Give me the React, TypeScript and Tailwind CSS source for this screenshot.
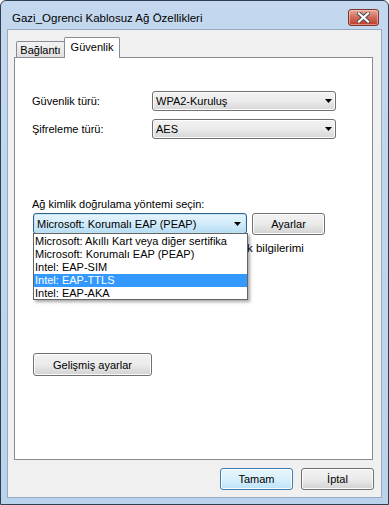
import React from "react";

function Arrow() {
  return (
    <svg width="7" height="4" viewBox="0 0 7 4" className="block">
      <path d="M0 0 H7 L3.5 4 Z" fill="#000" />
    </svg>
  );
}

function Combo({ text, width }: { text: string; width: string }) {
  return (
    <div
      className={`${width} h-[20px] border border-[#707070] rounded-[3px] bg-gradient-to-b from-[#f2f2f2] via-[#ebebeb] to-[#d6d6d6] flex items-center pl-[3px] pr-[3px] shadow-[inset_0_0_0_1px_#fcfcfc]`}
    >
      <span className="flex-1 leading-[14px]">{text}</span>
      <Arrow />
    </div>
  );
}

function Button({
  text,
  w,
  h,
  focused,
}: {
  text: string;
  w: string;
  h: string;
  focused?: boolean;
}) {
  return (
    <div
      className={`${w} ${h} rounded-[3px] border flex items-center justify-center shadow-[inset_0_0_0_1px_#fcfcfc] ${
        focused
          ? "border-[#3c7fb1] bg-gradient-to-b from-[#e8f5fc] via-[#d9f0fc] to-[#bde3f7]"
          : "border-[#707070] bg-gradient-to-b from-[#f2f2f2] via-[#ebebeb] to-[#d2d2d2]"
      }`}
    >
      <span className="leading-[14px]">{text}</span>
    </div>
  );
}

export default function App() {
  const items = [
    "Microsoft: Akıllı Kart veya diğer sertifika",
    "Microsoft: Korumalı EAP (PEAP)",
    "Intel: EAP-SIM",
    "Intel: EAP-TTLS",
    "Intel: EAP-AKA",
  ];
  return (
    <div className="w-[389px] h-[505px] bg-white">
      <div className="w-[389px] h-[505px] border border-[#2f3d4f] rounded-t-[6px] bg-gradient-to-b from-[#c3d8ee] to-[#bad3ec] flex flex-col font-['Liberation_Sans',Arial,sans-serif] text-[11px] text-black">
        {/* Title bar */}
        <div className="h-[28px] flex items-center justify-between pl-[11px] pr-[9px] shrink-0">
          <span className="text-[11.5px] leading-[14px] mt-[5px]">
            Gazi_Ogrenci Kablosuz Ağ Özellikleri
          </span>
          <div className="w-[31px] h-[17px] mt-[5px] rounded-[3px] border border-[#7b352c] bg-gradient-to-b from-[#e9a99b] via-[#d1695a] to-[#c0392b] flex items-center justify-center shadow-[inset_0_0_0_1px_rgba(255,220,210,0.5)]">
            <svg width="13" height="11" viewBox="0 0 13 11">
              <path
                d="M2 1.5 L11 9.5 M11 1.5 L2 9.5"
                stroke="#4a4a4a"
                strokeWidth="4"
                strokeLinecap="square"
              />
              <path
                d="M2 1.5 L11 9.5 M11 1.5 L2 9.5"
                stroke="#ffffff"
                strokeWidth="2.2"
                strokeLinecap="square"
              />
            </svg>
          </div>
        </div>

        {/* Client area */}
        <div className="mx-[6px] mb-[6px] h-[469px] border border-[#97aac0] bg-[#f0f0f0] flex flex-col">
          {/* Tabs */}
          <div className="mt-[7px] h-[20px] flex items-end pl-[8px]">
            <div className="w-[49px] h-[16px] border border-b-0 border-[#898c95] bg-gradient-to-b from-[#f3f3f3] to-[#e0e0e0] flex items-center justify-center rounded-t-[2px]">
              <span className="leading-[13px] mt-[2px]">Bağlantı</span>
            </div>
            <div className="relative z-10 -ml-[1px] -mb-[1px] w-[56px] h-[21px] border border-b-0 border-[#898c95] bg-white flex items-start justify-center rounded-t-[2px]">
              <span className="leading-[13px] mt-[3px]">Güvenlik</span>
            </div>
          </div>

          {/* Panel */}
          <div className="ml-[6px] mr-[8px] h-[403px] border border-[#898c95] bg-white flex flex-col pl-[17px]">
            <div className="mt-[33px] flex items-center h-[20px]">
              <span className="w-[120px] leading-[14px]">Güvenlik türü:</span>
              <Combo text="WPA2-Kuruluş" width="w-[184px]" />
            </div>
            <div className="mt-[8px] flex items-center h-[20px]">
              <span className="w-[120px] leading-[14px]">Şifreleme türü:</span>
              <Combo text="AES" width="w-[184px]" />
            </div>

            <div className="mt-[58px] h-[14px] leading-[14px]">
              Ağ kimlik doğrulama yöntemi seçin:
            </div>

            <div className="relative mt-[2px] h-[22px] flex items-start ml-[1px]">
              <div className="w-[214px] h-[21px] border border-[#2c628b] rounded-[3px] bg-gradient-to-b from-[#e5f4fc] via-[#d3ecfa] to-[#b5dcf3] flex items-center pl-[3px] pr-[5px] shadow-[inset_0_0_0_1px_#c4e5f6]">
                <span className="flex-1 leading-[14px]">
                  Microsoft: Korumalı EAP (PEAP)
                </span>
                <Arrow />
              </div>
              <div className="ml-[5px]">
                <Button text="Ayarlar" w="w-[73px]" h="h-[22px]" />
              </div>

              {/* Drop-down list */}
              <div className="absolute left-0 top-[20px] z-20 w-[215px] h-[67px] border border-[#646464] bg-white shadow-[2px_2px_3px_rgba(0,0,0,0.35)] pt-[1px]">
                {items.map((it, i) => (
                  <div
                    key={it}
                    className={`h-[13px] leading-[13px] pl-[1px] whitespace-nowrap ${
                      i === 3 ? "bg-[#3399ff] text-white" : ""
                    }`}
                  >
                    {it}
                  </div>
                ))}
              </div>
            </div>

            {/* Checkbox row (mostly hidden behind the list) */}
            <div className="mt-[6px] h-[14px] flex items-center ml-[1px]">
              <div className="w-[13px] h-[13px] border border-[#8f8f8f] bg-white shrink-0" />
              <span className="ml-[201px] leading-[14px] text-[11.5px] whitespace-nowrap">
                k bilgilerimi
              </span>
            </div>

            <div className="mt-[98px] ml-[1px]">
              <Button text="Gelişmiş ayarlar" w="w-[119px]" h="h-[23px]" />
            </div>
          </div>

          {/* Bottom buttons */}
          <div className="mt-[8px] flex justify-end gap-[8px] mr-[7px]">
            <Button text="Tamam" w="w-[73px]" h="h-[22px]" focused />
            <Button text="İptal" w="w-[73px]" h="h-[22px]" />
          </div>
        </div>
      </div>
    </div>
  );
}
